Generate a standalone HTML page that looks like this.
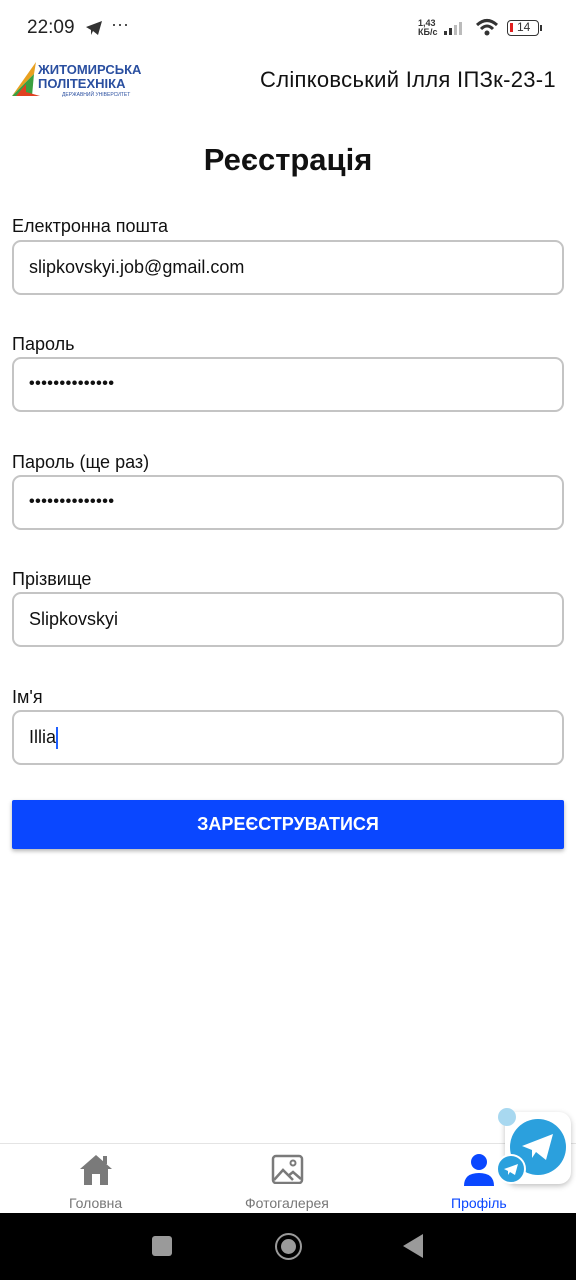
<!DOCTYPE html>
<html><head><meta charset="utf-8"><style>
*{box-sizing:border-box;margin:0;padding:0}
body{width:576px;height:1280px;background:#fff;font-family:"Liberation Sans",sans-serif;position:relative;overflow:hidden;color:#111}
.abs{position:absolute}
.lbl{position:absolute;left:12px;font-size:18px;color:#111}
.inp{position:absolute;left:12px;width:552px;height:55px;border:2.5px solid #c4c4c4;border-radius:9px;padding-left:15px;font-size:18px;line-height:50px;color:#111}
.dots{font-size:16px;letter-spacing:0.5px;font-weight:bold}
</style></head><body>
<div class="abs" style="left:27px;top:17px;font-size:19px;color:#222">22:09</div>
<svg class="abs" style="left:85px;top:20px" width="18" height="16" viewBox="0 0 18 16"><path d="M1 7 L17 1 L13 15 L8 11 L6 15 L6 10 Z" fill="#333"/></svg>
<div class="abs" style="left:111px;top:14px;font-size:18px;color:#333">···</div>
<div class="abs" style="left:418px;top:19px;font-size:9px;line-height:9px;font-weight:bold;color:#333">1,43<br>КБ/с</div>
<svg class="abs" style="left:443px;top:20px" width="26" height="16"><rect x="1" y="11" width="3" height="4" fill="#333"/><rect x="6" y="8" width="3" height="7" fill="#333"/><rect x="11" y="5" width="3" height="10" fill="#bbb"/><rect x="16" y="2" width="3" height="13" fill="#bbb"/></svg>
<svg class="abs" style="left:475px;top:18px" width="26" height="20" viewBox="0 0 26 20"><path d="M2 7 Q12 -2 22 7" stroke="#333" stroke-width="3" fill="none"/><path d="M6 11 Q12 5 18 11" stroke="#333" stroke-width="3" fill="none"/><circle cx="12" cy="15" r="2.5" fill="#333"/></svg>
<div class="abs" style="left:507px;top:20px;width:32px;height:16px;border:1.5px solid #333;border-radius:4px;font-size:12px;line-height:13px;padding-left:9px;color:#333"><span style="position:absolute;left:2px;top:2px;width:3px;height:9px;background:#e02020"></span>14</div>
<div class="abs" style="left:540px;top:25px;width:2px;height:6px;background:#333"></div>
<svg class="abs" style="left:10px;top:60px" width="32" height="40"><path d="M2 36 L26 2 L24 14 Z" fill="#e8a020"/><path d="M2 36 L24 14 L22 36 Z" fill="#3aa040"/><path d="M6 36 L16 24 L16 32 L30 36 Z" fill="#e04020"/></svg>
<div class="abs" style="left:38px;top:63px;font-size:13px;line-height:14px;font-weight:bold;color:#2a4fa0">ЖИТОМИРСЬКА<br>ПОЛІТЕХНІКА</div>
<div class="abs" style="left:62px;top:92px;font-size:5px;color:#2a4fa0">ДЕРЖАВНИЙ УНІВЕРСИТЕТ</div>
<div class="abs" style="left:260px;top:67px;font-size:22px;letter-spacing:0.3px;color:#111">Сліпковський Ілля ІПЗк-23-1</div>
<div class="abs" style="left:0;width:576px;top:142px;text-align:center;font-size:31px;font-weight:bold">Реєстрація</div>
<div class="lbl" style="top:216px">Електронна пошта</div>
<div class="inp" style="top:240px">slipkovskyi.job@gmail.com</div>
<div class="lbl" style="top:334px">Пароль</div>
<div class="inp dots" style="top:357px">••••••••••••••</div>
<div class="lbl" style="top:452px">Пароль (ще раз)</div>
<div class="inp dots" style="top:475px">••••••••••••••</div>
<div class="lbl" style="top:569px">Прізвище</div>
<div class="inp" style="top:592px">Slipkovskyi</div>
<div class="lbl" style="top:687px">Ім'я</div>
<div class="inp" style="top:710px">Illia<span style="display:inline-block;width:2px;height:22px;background:#2060ff;vertical-align:middle"></span></div>
<div class="abs" style="left:12px;top:800px;width:552px;height:49px;background:#0a47ff;color:#fff;font-size:18px;font-weight:bold;text-align:center;line-height:49px;box-shadow:0 2px 4px rgba(0,0,0,.3);border-radius:2px">ЗАРЕЄСТРУВАТИСЯ</div>
<div class="abs" style="left:0;top:1143px;width:576px;height:1px;background:#e4e4e4"></div>
<svg class="abs" style="left:78px;top:1152px" width="36" height="34" viewBox="0 0 36 34"><path d="M2 17 L18 3 L34 17 L30 17 L30 33 L22 33 L22 22 L14 22 L14 33 L6 33 L6 17 Z" fill="#7a7a7a"/><rect x="25" y="4" width="4" height="8" fill="#7a7a7a"/></svg>
<div class="abs" style="left:69px;top:1195px;font-size:14px;color:#777">Головна</div>
<svg class="abs" style="left:271px;top:1154px" width="34" height="30"><rect x="2" y="2" width="29" height="27" rx="3" fill="none" stroke="#7a7a7a" stroke-width="2.5"/><circle cx="22" cy="9" r="2.5" fill="none" stroke="#7a7a7a" stroke-width="2"/><path d="M3 26 L12 16 L22 26 M17 22 L22 18 L30 25" fill="none" stroke="#7a7a7a" stroke-width="2.5"/></svg>
<div class="abs" style="left:245px;top:1195px;font-size:14px;color:#777">Фотогалерея</div>
<svg class="abs" style="left:462px;top:1152px" width="36" height="34"><circle cx="17" cy="10" r="8" fill="#0a47ff"/><path d="M2 34 Q2 21 17 21 Q32 21 32 34 Z" fill="#0a47ff"/></svg>
<div class="abs" style="left:451px;top:1195px;font-size:14px;color:#0a47ff">Профіль</div>
<div class="abs" style="left:505px;top:1112px;width:66px;height:72px;background:#fff;border-radius:12px;box-shadow:0 2px 6px rgba(0,0,0,.25)"></div>
<div class="abs" style="left:498px;top:1108px;width:18px;height:18px;border-radius:50%;background:#a8d8f0"></div>
<div class="abs" style="left:510px;top:1119px;width:56px;height:56px;border-radius:50%;background:#2ba0dd"></div>
<svg class="abs" style="left:520px;top:1132px" width="36" height="30"><path d="M2 14 L33 2 L26 28 L16 20 L12 26 L12 18 Z" fill="#fff"/></svg>
<div class="abs" style="left:496px;top:1154px;width:30px;height:30px;border-radius:50%;background:#2ba0dd;border:2px solid #fff"></div>
<svg class="abs" style="left:503px;top:1163px" width="16" height="13"><path d="M1 6 L15 1 L12 12 L7 9 L5 12 L5 8 Z" fill="#fff"/></svg>
<div class="abs" style="left:0;top:1213px;width:576px;height:67px;background:#000"></div>
<div class="abs" style="left:152px;top:1236px;width:20px;height:20px;background:#9a9a9a;border-radius:3px"></div>
<div class="abs" style="left:275px;top:1233px;width:27px;height:27px;border-radius:50%;border:2.5px solid #9a9a9a"></div>
<div class="abs" style="left:281px;top:1239px;width:15px;height:15px;border-radius:50%;background:#9a9a9a"></div>
<svg class="abs" style="left:402px;top:1234px" width="22" height="24"><path d="M21 0 L21 24 L1 12 Z" fill="#9a9a9a"/></svg>
</body></html>
